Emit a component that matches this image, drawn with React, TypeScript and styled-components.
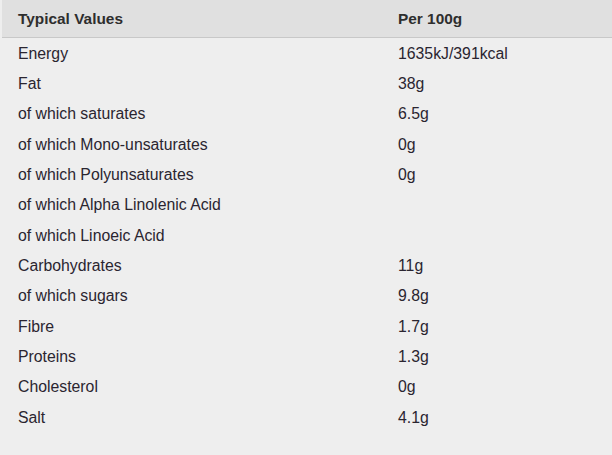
import React from "react";
import styled, { createGlobalStyle } from "styled-components";

const Global = createGlobalStyle`
  html, body { margin: 0; padding: 0; background: #eeeeee; }
  body { font-family: "Liberation Sans", Arial, Helvetica, sans-serif; }
`;

const Page = styled.div`
  width: 612px;
  height: 455px;
  background: #eeeeee;
  padding-left: 2px;
  box-sizing: border-box;
`;

const Table = styled.div`
  display: grid;
  grid-template-columns: 380px 1fr;
  color: #2a2530;
  font-size: 15.8px;
`;

const HeadCell = styled.div`
  background: #e0e0e0;
  height: 37px;
  border-bottom: 1px solid #c8c8c8;
  display: flex;
  align-items: center;
  padding-left: 16px;
  font-weight: bold;
  font-size: 15.4px;
  color: #2e2e2e;
`;

const Cell = styled.div`
  height: 30.33px;
  display: flex;
  align-items: center;
  padding-left: 16px;
  padding-top: 1px;
  box-sizing: border-box;
`;

const rows: [string, string][] = [
  ["Energy", "1635kJ/391kcal"],
  ["Fat", "38g"],
  ["of which saturates", "6.5g"],
  ["of which Mono-unsaturates", "0g"],
  ["of which Polyunsaturates", "0g"],
  ["of which Alpha Linolenic Acid", ""],
  ["of which Linoeic Acid", ""],
  ["Carbohydrates", "11g"],
  ["of which sugars", "9.8g"],
  ["Fibre", "1.7g"],
  ["Proteins", "1.3g"],
  ["Cholesterol", "0g"],
  ["Salt", "4.1g"],
];

export default function App() {
  return (
    <Page>
      <Global />
      <Table>
        <HeadCell>Typical Values</HeadCell>
        <HeadCell>Per 100g</HeadCell>
        {rows.map(([k, v]) => (
          <React.Fragment key={k}>
            <Cell>{k}</Cell>
            <Cell>{v}</Cell>
          </React.Fragment>
        ))}
      </Table>
    </Page>
  );
}
